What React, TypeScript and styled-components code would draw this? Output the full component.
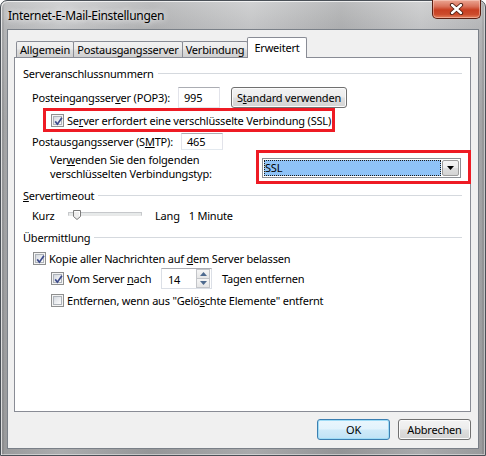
import React from "react";
import styled, { createGlobalStyle } from "styled-components";

const GlobalStyle = createGlobalStyle`
  html, body { margin: 0; padding: 0; background: #ffffff; }
  body {
    font-family: "Noto Sans", "Liberation Sans", sans-serif;
    font-size: 11px;
    letter-spacing: -0.2px;
    color: #000;
  }
  * { box-sizing: border-box; }
`;

/* ---------- window frame ---------- */

const Window = styled.div`
  width: 486px;
  height: 456px;
  display: flex;
  flex-direction: column;
  padding: 0 6px 6px;
  border: 1px solid #4a5057;
  border-radius: 7px 7px 0 0;
  background:
    linear-gradient(90deg,
      rgba(0, 0, 0, 0.06) 0,
      rgba(255, 255, 255, 0.1) 60px,
      rgba(0, 0, 0, 0.08) 150px,
      rgba(255, 255, 255, 0.08) 250px,
      rgba(0, 0, 0, 0.09) 340px,
      rgba(255, 255, 255, 0.08) 420px,
      rgba(0, 0, 0, 0.06) 486px),
    linear-gradient(180deg, #cdcecf 0, #bdbec0 28px, #adaeb0 120px, #a2a3a5 100%);
  box-shadow:
    inset 1px 1px 0 rgba(255, 255, 255, 0.7),
    inset -1px -1px 0 rgba(255, 255, 255, 0.45),
    inset 3px 0 0 rgba(0, 0, 0, 0.08),
    inset -3px 0 0 rgba(0, 0, 0, 0.08);
`;

const TitleBar = styled.div`
  height: 28px;
  display: flex;
  align-items: flex-start;
`;

const Title = styled.span`
  margin: 7px 0 0 1px;
  font-size: 12px;
  line-height: 16px;
  letter-spacing: -0.3px;
  color: #000;
  text-shadow: 0 0 6px rgba(255, 255, 255, 0.95), 0 0 10px rgba(255, 255, 255, 0.7);
`;

const CloseButton = styled.div`
  margin: -1px -2px 0 auto;
  width: 49px;
  height: 19px;
  display: flex;
  align-items: center;
  justify-content: center;
  border: 1px solid #5b1f12;
  border-top: none;
  border-radius: 0 0 5px 5px;
  background: linear-gradient(180deg, #eba693 0%, #da735c 35%, #c83f22 55%, #cc4b2c 80%, #e5835f 100%);
  box-shadow: inset 0 0 0 1px rgba(255, 220, 210, 0.45);
`;

const Client = styled.div`
  flex: 1;
  display: flex;
  flex-direction: column;
  background: #f0f0f0;
  border: 1px solid #7a8088;
  padding: 7px 7px 0 6px;
`;

/* ---------- tabs ---------- */

const TabStrip = styled.div`
  position: relative;
  z-index: 1;
  display: flex;
  align-items: flex-end;
  height: 20px;
  padding-left: 2px;
`;

const Tab = styled.div<{ $w: number; $active?: boolean }>`
  width: ${(p) => p.$w}px;
  height: ${(p) => (p.$active ? 21 : 16)}px;
  margin-bottom: ${(p) => (p.$active ? -1 : 0)}px;
  margin-left: -1px;
  &:first-child { margin-left: 0; }
  display: flex;
  align-items: center;
  justify-content: center;
  padding-bottom: ${(p) => (p.$active ? 2 : 0)}px;
  border: 1px solid #898c95;
  border-bottom: none;
  border-radius: 2px 2px 0 0;
  background: ${(p) =>
    p.$active
      ? "#ffffff"
      : "linear-gradient(180deg, #f2f2f2 0%, #ebebeb 45%, #dddddd 55%, #cfcfcf 100%)"};
`;

const TabPanel = styled.div`
  height: 355px;
  display: flex;
  flex-direction: column;
  border: 1px solid #898c95;
  background: #ffffff;
  padding: 9px 8px 0 8px;
`;

/* ---------- panel contents ---------- */

const GroupHeader = styled.div<{ $top: number }>`
  display: flex;
  align-items: center;
  height: 13px;
  margin-top: ${(p) => p.$top}px;
  &::after {
    content: "";
    flex: 1;
    height: 1px;
    margin-left: 4px;
    background: #d5d9de;
  }
`;

const Row = styled.div<{ $top: number; $indent: number; $h: number }>`
  display: flex;
  align-items: center;
  height: ${(p) => p.$h}px;
  margin-top: ${(p) => p.$top}px;
  padding-left: ${(p) => p.$indent}px;
`;

const FieldLabel = styled.span<{ $w: number }>`
  width: ${(p) => p.$w}px;
  flex: none;
  white-space: nowrap;
`;

const TwoLineLabel = styled.span<{ $w: number }>`
  width: ${(p) => p.$w}px;
  flex: none;
  line-height: 14px;
`;

const Key = styled.u`
  text-decoration: underline;
  text-underline-offset: 1px;
`;

const TextBox = styled.div<{ $w: number; $h: number }>`
  width: ${(p) => p.$w}px;
  height: ${(p) => p.$h}px;
  flex: none;
  display: flex;
  align-items: center;
  padding-left: 5px;
  border: 1px solid #dbdfe6;
  border-top-color: #abadb3;
  border-left-color: #e2e3ea;
  border-right-color: #e2e3ea;
  border-bottom-color: #e3e9ef;
  background: #ffffff;
`;

const PushButton = styled.div<{ $w: number; $h: number; $default?: boolean; $gap?: number }>`
  width: ${(p) => p.$w}px;
  height: ${(p) => p.$h}px;
  flex: none;
  margin-left: ${(p) => p.$gap ?? 0}px;
  display: flex;
  align-items: center;
  justify-content: center;
  border: 1px solid ${(p) => (p.$default ? "#3c7fb1" : "#707070")};
  border-radius: 3px;
  background: ${(p) =>
    p.$default
      ? "linear-gradient(180deg, #eaf6fd 0%, #e2f3fc 48%, #cfeaf9 52%, #bfe2f5 100%)"
      : "linear-gradient(180deg, #f3f3f3 0%, #ececec 48%, #dfdfdf 52%, #d3d3d3 100%)"};
  box-shadow: inset 0 0 0 1px ${(p) => (p.$default ? "#9fdcf6" : "#fbfbfb")};
`;

const Highlight = styled.div<{ $w: number; $h: number }>`
  width: ${(p) => p.$w}px;
  height: ${(p) => p.$h}px;
  flex: none;
  display: flex;
  align-items: center;
  border: 3px solid #ee1b24;
`;

const CheckRow = styled.div<{ $top: number; $indent: number }>`
  display: flex;
  align-items: center;
  gap: 3px;
  height: 14px;
  margin-top: ${(p) => p.$top}px;
  padding-left: ${(p) => p.$indent}px;
  white-space: nowrap;
`;

const CheckLabel = styled.span<{ $w?: number }>`
  display: flex;
  align-items: center;
  gap: 3px;
  width: ${(p) => (p.$w ? `${p.$w}px` : "auto")};
  flex: none;
`;

const Box = styled.span`
  position: relative;
  width: 13px;
  height: 13px;
  flex: none;
  border: 1px solid #8e8f8f;
  background: #f4f4f4;
  padding: 1px;
  display: flex;
`;

const BoxFill = styled.span`
  flex: 1;
  border: 1px solid #aeb3b9;
  background: linear-gradient(135deg, #d4d8de 0%, #eceef1 55%, #fbfbfb 100%);
`;

const CheckMark = styled.svg`
  position: absolute;
  left: 1px;
  top: 1px;
`;

function CheckBox({ checked }: { checked?: boolean }) {
  return (
    <Box>
      <BoxFill />
      {checked && (
        <CheckMark width="11" height="11" viewBox="0 0 11 11">
          <path d="M2.2 5.4 L4.4 8.2 L8.9 1.8" fill="none" stroke="#3e4c8c" strokeWidth="1.7" />
        </CheckMark>
      )}
    </Box>
  );
}

/* combo box */

const ComboBox = styled.div`
  width: 199px;
  height: 20px;
  margin: 1px 0 0 3px;
  display: flex;
  padding: 1px;
  border: 1px solid #8d9096;
  background: #ffffff;
`;

const ComboValue = styled.div`
  flex: 1;
  display: flex;
  align-items: center;
  padding-left: 1px;
  margin-right: 1px;
  background: #8fc3f7;
  outline: 1px dotted #1a1a1a;
  outline-offset: -1px;
`;

const ComboArrow = styled.div`
  width: 17px;
  flex: none;
  display: flex;
  align-items: center;
  justify-content: center;
  border: 1px solid #9c9c9c;
  border-radius: 2px;
  background: linear-gradient(180deg, #f4f4f4 0%, #ececec 50%, #dedede 51%, #d4d4d4 100%);
`;

/* slider */

const Slider = styled.div`
  position: relative;
  width: 74px;
  height: 15px;
  flex: none;
  padding-top: 4px;
`;

const SliderTrack = styled.div`
  height: 4px;
  border: 1px solid #c6c8cb;
  border-bottom-color: #e8e8e8;
  background: #e7eaea;
`;

const SliderThumb = styled.svg`
  position: absolute;
  left: 5px;
  top: 2px;
`;

const SideText = styled.span<{ $left: number }>`
  margin-left: ${(p) => p.$left}px;
  white-space: nowrap;
`;

/* spin box */

const SpinBox = styled.div`
  width: 51px;
  height: 21px;
  flex: none;
  display: flex;
  border: 1px solid #dbdfe6;
  border-top-color: #abadb3;
  background: #ffffff;
`;

const SpinValue = styled.span`
  flex: 1;
  display: flex;
  align-items: center;
  padding-left: 6px;
  padding-top: 1px;
`;

const SpinButtons = styled.div`
  width: 14px;
  display: flex;
  flex-direction: column;
  margin: 0 1px 0 0;
`;

const SpinButton = styled.div`
  flex: 1;
  display: flex;
  align-items: center;
  justify-content: center;
  border: 1px solid #c3c5c9;
  background: linear-gradient(180deg, #f5f5f5 0%, #e6e6e6 100%);
  & + & { border-top: none; }
`;

const ButtonRow = styled.div`
  display: flex;
  justify-content: flex-end;
  margin-top: 7px;
`;

export default function App() {
  return (
    <>
      <GlobalStyle />
      <Window>
        <TitleBar>
          <Title>Internet-E-Mail-Einstellungen</Title>
          <CloseButton aria-label="Schließen">
            <svg width="15" height="12" viewBox="0 0 15 12">
              <path d="M3 2 L12 10 M12 2 L3 10" stroke="#4a1a0e" strokeWidth="4.2" strokeLinecap="round" />
              <path d="M3 2 L12 10 M12 2 L3 10" stroke="#ffffff" strokeWidth="2.4" strokeLinecap="round" />
            </svg>
          </CloseButton>
        </TitleBar>

        <Client>
          <TabStrip>
            <Tab $w={58}>Allgemein</Tab>
            <Tab $w={110}>Postausgangsserver</Tab>
            <Tab $w={66}>Verbindung</Tab>
            <Tab $w={60} $active>Erweitert</Tab>
          </TabStrip>

          <TabPanel>
            <GroupHeader $top={0}>Serveranschlussnummern</GroupHeader>

            <Row $top={7} $indent={9} $h={21}>
              <FieldLabel $w={146}>
                Posteingangsser<Key>v</Key>er (POP3):
              </FieldLabel>
              <TextBox $w={42} $h={21}>995</TextBox>
              <PushButton $w={116} $h={21} $gap={11}>
                S<Key>t</Key>andard verwenden
              </PushButton>
            </Row>

            <Row $top={0} $indent={20} $h={24}>
              <Highlight $w={292} $h={24}>
                <CheckRow $top={0} $indent={5}>
                  <CheckBox checked />
                  <span>
                    Se<Key>r</Key>ver erfordert eine verschlüsselte Verbindung (SSL)
                  </span>
                </CheckRow>
              </Highlight>
            </Row>

            <Row $top={1} $indent={9} $h={17}>
              <FieldLabel $w={149}>
                Postausgangsserver (S<Key>M</Key>TP):
              </FieldLabel>
              <TextBox $w={42} $h={17}>465</TextBox>
            </Row>

            <Row $top={0} $indent={27} $h={34}>
              <TwoLineLabel $w={206}>
                Ver<Key>w</Key>enden Sie den folgenden
                <br />
                verschlüsselten Verbindungstyp:
              </TwoLineLabel>
              <Highlight $w={215} $h={34}>
                <ComboBox>
                  <ComboValue>SSL</ComboValue>
                  <ComboArrow>
                    <svg width="7" height="4" viewBox="0 0 7 4">
                      <path d="M0 0 H7 L3.5 4 Z" fill="#000" />
                    </svg>
                  </ComboArrow>
                </ComboBox>
              </Highlight>
            </Row>

            <GroupHeader $top={5}>
              <span>
                <Key>S</Key>ervertimeout
              </span>
            </GroupHeader>

            <Row $top={6} $indent={9} $h={15}>
              <FieldLabel $w={36}>Kurz</FieldLabel>
              <Slider>
                <SliderTrack />
                <SliderThumb width="8" height="10" viewBox="0 0 8 10">
                  <path d="M0.5 0.5 H7.5 V6.5 L4 9.5 L0.5 6.5 Z" fill="#eeeeee" stroke="#7b7b7b" />
                  <path d="M1.5 1.5 H6.5 V6" fill="none" stroke="#ffffff" />
                </SliderThumb>
              </Slider>
              <SideText $left={13}>Lang</SideText>
              <SideText $left={9}>1 Minute</SideText>
            </Row>

            <GroupHeader $top={8}>Übermittlung</GroupHeader>

            <CheckRow $top={7} $indent={10}>
              <CheckBox checked />
              <span>
                Kopie aller Nachrichten auf <Key>d</Key>em Server belassen
              </span>
            </CheckRow>

            <Row $top={3} $indent={28} $h={21}>
              <CheckLabel $w={110}>
                <CheckBox checked />
                <span>
                  Vom Server <Key>n</Key>ach
                </span>
              </CheckLabel>
              <SpinBox>
                <SpinValue>14</SpinValue>
                <SpinButtons>
                  <SpinButton>
                    <svg width="7" height="4" viewBox="0 0 7 4">
                      <path d="M0 4 L3.5 0 L7 4 Z" fill="#4e6a8e" />
                    </svg>
                  </SpinButton>
                  <SpinButton>
                    <svg width="7" height="4" viewBox="0 0 7 4">
                      <path d="M0 0 L3.5 4 L7 0 Z" fill="#4e6a8e" />
                    </svg>
                  </SpinButton>
                </SpinButtons>
              </SpinBox>
              <SideText $left={10}>Tagen entfernen</SideText>
            </Row>

            <CheckRow $top={4} $indent={28}>
              <CheckBox />
              <span>
                Entfernen, wenn aus "Gelö<Key>s</Key>chte Elemente" entfernt
              </span>
            </CheckRow>
          </TabPanel>

          <ButtonRow>
            <PushButton $w={73} $h={21} $default>
              OK
            </PushButton>
            <PushButton $w={73} $h={21} $gap={8}>
              Abbrechen
            </PushButton>
          </ButtonRow>
        </Client>
      </Window>
    </>
  );
}
